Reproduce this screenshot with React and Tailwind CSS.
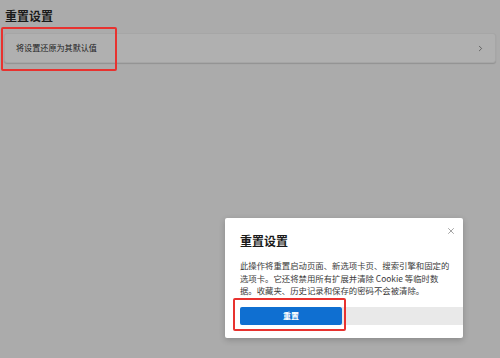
import { X, ChevronRight } from 'lucide-react';

const cjk = { fontFamily: '"Noto Sans CJK SC", "Noto Sans", sans-serif' };

const App = () => {
  return (
    <div className="relative w-[500px] h-[358px] overflow-hidden bg-[#ababab] text-[#1c1c1c]" style={cjk}>
      {/* 页面标题 */}
      <h1 className="pl-[5px] pt-[7px] h-[33px] text-[12px] font-bold leading-[18px] text-[#1a1a1a]">重置设置</h1>

      {/* 设置卡片 */}
      <div className="mx-[4px] h-[30px] flex items-center justify-between pl-[11px] pr-[10px] bg-[#b0b0b0] border border-[#a6a6a6] rounded-[3px] shadow-[0_1px_1px_rgba(0,0,0,0.15)]">
        <span className="text-[8.1px] leading-none text-[#222]">将设置还原为其默认值</span>
        <ChevronRight className="w-[9px] h-[9px] text-[#4a4a4a]" strokeWidth={2} />
      </div>

      {/* 标注框 */}
      <div className="absolute left-[1px] top-[27px] w-[116px] h-[44px] border-2 border-[#e8322f] rounded-[2px]" />

      {/* 对话框 */}
      <div className="absolute left-[225px] top-[218px] w-[238px] h-[120px] bg-white rounded-[2px] shadow-[0_2px_6px_rgba(0,0,0,0.2)]">
        <button className="absolute right-[7px] top-[8px] text-[#555]">
          <X className="w-[10px] h-[10px]" strokeWidth={1.3} />
        </button>
        <div className="pl-[15px] pt-[15px]">
          <h2 className="text-[12px] font-bold leading-[16px] text-[#1a1a1a]">重置设置</h2>
          <p className="mt-[10px] text-[8.4px] leading-[12.5px] text-[#3a3a3a] whitespace-nowrap">
            此操作将重置启动页面、新选项卡页、搜索引擎和固定的<br />
            选项卡。它还将禁用所有扩展并清除 Cookie 等临时数<br />
            据。收藏夹、历史记录和保存的密码不会被清除。
          </p>
          <div className="mt-[10px] flex h-[18px]">
            <button className="w-[102px] h-[18px] bg-[#0f6fd1] rounded-[2px] text-white text-[8px] font-bold leading-none">重置</button>
            <div className="flex-1 bg-[#e9e9e9]" />
          </div>
        </div>
        {/* 按钮标注框 */}
        <div className="absolute left-[8px] top-[80px] w-[113px] h-[33px] border-2 border-[#e8322f] rounded-[2px]" />
      </div>
    </div>
  );
};

export default App;
